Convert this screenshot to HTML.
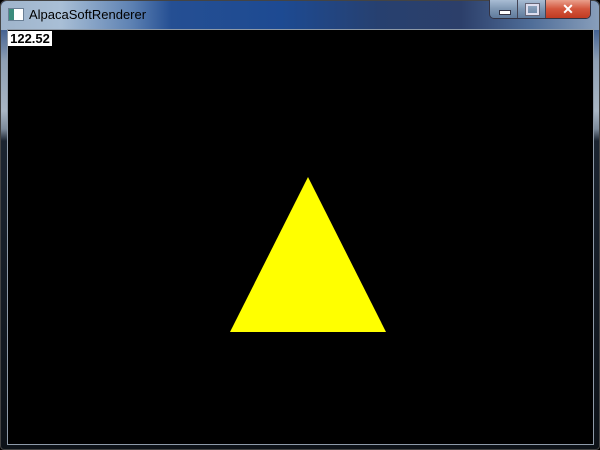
<!DOCTYPE html>
<html><head><style>
body{margin:0;width:600px;height:450px;overflow:hidden;background:#000;position:relative;font-family:"Liberation Sans",sans-serif}
.frame{position:absolute;left:0;top:0;width:598px;height:448px;border:1px solid #444;border-radius:6px 6px 4px 4px;background:linear-gradient(180deg,#2a4a7e 0,#3a5a8e 25px,#8fa0b4 60px,#a9b6c4 110px,#7c8a9a 128px,#1b2430 140px,#0d1218 450px)}
.title{position:absolute;left:1px;top:1px;width:598px;height:29px;border-radius:6px 6px 0 0;background:linear-gradient(90deg,#9fb4cb 0,#a9bfd6 60px,#5e82b3 130px,#254f93 170px,#1d4a92 280px,#27406f 380px,#2c3f6a 460px,#4f6d98 530px,#8aa0bc 600px)}
.client{position:absolute;left:7px;top:29px;width:585px;height:414px;border:1px solid #8e9aa8;background:#000}
.fps{position:absolute;left:8px;top:31px;width:44px;height:15px;background:#fff;color:#000;font-size:13px;line-height:15px;font-weight:bold;text-align:center}
.t{position:absolute;left:29px;top:7px;font-size:13px;color:#000}
.ico{position:absolute;left:8px;top:8px;width:14px;height:11px;border:1px solid #6a7f95;background:linear-gradient(90deg,#3b8c7c 0 5px,#fff 5px)}
.btns{position:absolute;left:489px;top:0;height:18px;display:flex;border:1px solid #334;border-top:none;border-radius:0 0 5px 5px;overflow:hidden}
.b{width:27px;height:18px;background:linear-gradient(#a9bdd4,#7f97b3 50%,#5f7a9c);border-right:1px solid #445;position:relative}
.x{width:44px;height:18px;background:linear-gradient(#e9a08d,#d3553c 50%,#c03a22);position:relative;color:#fff;font-weight:bold;font-size:14px;text-align:center;line-height:18px}
</style></head><body>
<div class="frame"></div>
<div class="title"></div>
<div class="ico"></div>
<div class="t">AlpacaSoftRenderer</div>
<div class="btns"><div class="b"><div style="position:absolute;left:9px;top:10px;width:10px;height:3px;background:#fff;border:1px solid #334"></div></div><div class="b"><div style="position:absolute;left:8px;top:4px;width:9px;height:7px;border:2px solid #dde;outline:1px solid #667"></div></div><div class="x">✕</div></div>
<div class="client"></div>
<svg style="position:absolute;left:0;top:0" width="600" height="450"><polygon points="308,177 230,332 386,332" fill="#ffff00"/></svg>
<div class="fps">122.52</div>
</body></html>
